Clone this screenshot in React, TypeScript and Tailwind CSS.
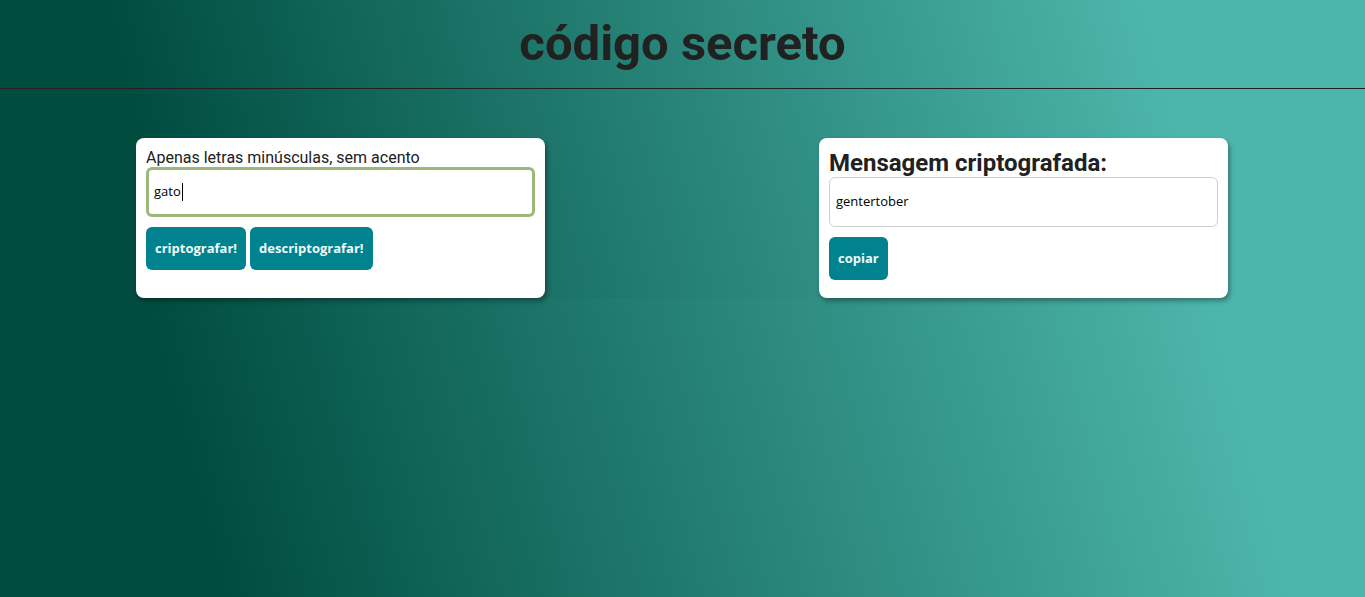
export default function App() {
  return (
    <div className="min-h-screen bg-[linear-gradient(75deg,#004d40_15%,#4db6ac_85%)] font-['Roboto',sans-serif] text-[#212121]">
      <div className="bg-[linear-gradient(75deg,#004d40_13%,#4db6ac_85%)]">
        <header className="h-[89px] flex items-center justify-center border-b border-[#212121]">
          <h1 className="text-[49px] leading-[56px] font-bold text-[#212121] -mt-px">código secreto</h1>
        </header>

        <main className="flex justify-between pl-[136px] pr-[137px] pt-[49px]">
          <section className="w-[409px] h-[160px] bg-white rounded-lg shadow-[2px_3px_5px_rgba(0,0,0,0.35)] px-[10px] pt-[10px]">
            <label className="block text-base leading-[19px]">Apenas letras minúsculas, sem acento</label>
            <div className="h-[50px] border-[3px] border-[#9bb77a] rounded-md flex items-center px-[5px] font-['Open_Sans',sans-serif] text-[13px] text-black">
              <span>gato</span>
              <span className="w-px h-[18px] bg-black ml-px" />
            </div>
            <div className="flex gap-[4px] mt-[10px] font-['Open_Sans',sans-serif]">
              <button className="h-[43px] px-[9px] bg-[#00838f] text-[#f2fafa] text-[13px] font-bold rounded-md">
                criptografar!
              </button>
              <button className="h-[43px] px-[9px] bg-[#00838f] text-[#f2fafa] text-[13px] font-bold rounded-md">
                descriptografar!
              </button>
            </div>
          </section>

          <section className="w-[409px] h-[160px] bg-white rounded-lg shadow-[2px_3px_5px_rgba(0,0,0,0.35)] px-[10px] pt-[11px]">
            <h2 className="text-2xl leading-7 font-bold">Mensagem criptografada:</h2>
            <div className="h-[50px] border border-[#cfcfcf] rounded-md flex items-center px-[6px] font-['Open_Sans',sans-serif] text-[13px] text-black">
              gentertober
            </div>
            <button className="mt-[10px] h-[43px] px-[9px] bg-[#00838f] text-[#f2fafa] text-[13px] font-bold rounded-md font-['Open_Sans',sans-serif]">
              copiar
            </button>
          </section>
        </main>
      </div>
    </div>
  );
}
